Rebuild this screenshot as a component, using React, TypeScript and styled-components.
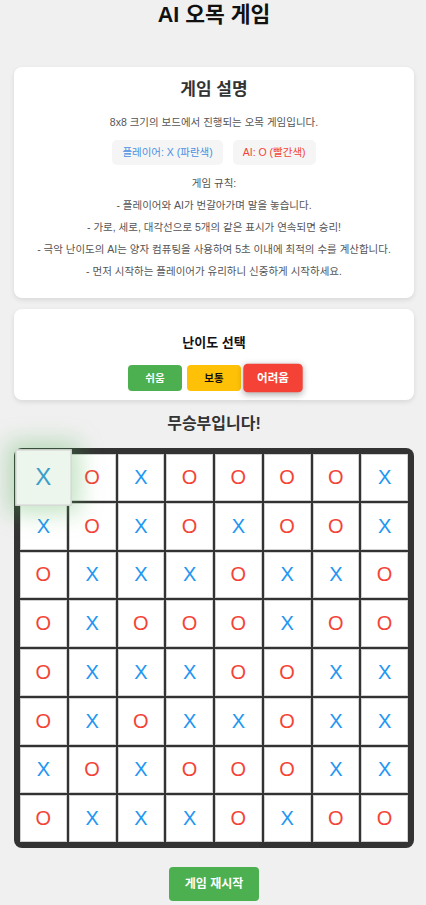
import React from "react";
import styled, { createGlobalStyle } from "styled-components";

const Global = createGlobalStyle`
  html, body { margin: 0; padding: 0; background: #f0f0f0; }
  body { font-family: "Liberation Sans", "Noto Sans CJK KR", sans-serif; }
  * { box-sizing: border-box; }
`;

const Page = styled.div`
  width: 402px;
  margin: 0 auto;
  padding: 0 0 4px 2px;
  display: flex;
  flex-direction: column;
  align-items: center;
`;

const Title = styled.h1`
  margin: 0;
  font-size: 21.5px;
  line-height: 30px;
  font-weight: 700;
  color: #111;
`;

const Card = styled.section<{ $pt: number; $pb: number; $mt: number }>`
  width: 100%;
  margin-top: ${(p) => p.$mt}px;
  padding: ${(p) => p.$pt}px 15px ${(p) => p.$pb}px;
  background: #fff;
  border-radius: 8px;
  box-shadow: 0 2px 5px rgba(0, 0, 0, 0.1);
  display: flex;
  flex-direction: column;
  align-items: center;
  text-align: center;
`;

const CardTitle = styled.h2<{ $size: number; $color: string }>`
  margin: 0;
  font-size: ${(p) => p.$size}px;
  line-height: 22px;
  font-weight: 700;
  color: ${(p) => p.$color};
`;

const Text = styled.p<{ $mt: number; $lh: number }>`
  margin: ${(p) => p.$mt}px 0 0;
  font-size: 10.5px;
  line-height: ${(p) => p.$lh}px;
  color: #555;
`;

const Rules = styled.div`
  margin-top: 3px;
`;

const Badges = styled.div`
  margin-top: 10px;
  display: flex;
  gap: 10px;
`;

const Badge = styled.span<{ $color: string }>`
  background: #f5f5f5;
  border-radius: 5px;
  padding: 5px 10px;
  font-size: 10.5px;
  line-height: 15px;
  color: ${(p) => p.$color};
`;

const Levels = styled.div`
  margin-top: 11px;
  display: flex;
  gap: 5px;
`;

const LevelButton = styled.button<{ $bg: string; $fg: string; $active?: boolean }>`
  border: none;
  border-radius: 4px;
  width: 54px;
  height: 26px;
  padding: 0;
  font-family: inherit;
  font-size: 10.5px;
  line-height: 16px;
  font-weight: 700;
  background: ${(p) => p.$bg};
  color: ${(p) => p.$fg};
  transform: ${(p) => (p.$active ? "scale(1.1)" : "none")};
  box-shadow: ${(p) => (p.$active ? "0 2px 6px rgba(0,0,0,0.3)" : "none")};
`;

const Status = styled.div`
  margin-top: 14px;
  font-size: 16px;
  line-height: 20px;
  font-weight: 700;
  color: #333;
`;

const Board = styled.div`
  margin-top: 14px;
  width: 400px;
  padding: 6px;
  background: #333;
  border-radius: 8px;
  display: grid;
  grid-template-columns: repeat(8, 1fr);
  gap: 2px;
`;

const Cell = styled.div<{ $mark: string; $hl?: boolean }>`
  aspect-ratio: 1;
  background: ${(p) => (p.$hl ? "#edf6ed" : "#fff")};
  border: 1px solid #d0d0d0;
  display: flex;
  align-items: center;
  justify-content: center;
  font-family: "Liberation Sans", sans-serif;
  font-size: 20px;
  color: ${(p) => (p.$hl ? "#3a9ec8" : p.$mark === "X" ? "#2196f3" : "#f44336")};
  position: relative;
  z-index: ${(p) => (p.$hl ? 1 : 0)};
  transform: ${(p) => (p.$hl ? "scale(1.2)" : "none")};
  box-shadow: ${(p) => (p.$hl ? "0 0 18px 6px rgba(76,175,80,0.35)" : "none")};
`;

const Restart = styled.button`
  margin-top: 19px;
  border: none;
  border-radius: 4px;
  background: #4caf50;
  color: #fff;
  font-family: inherit;
  font-size: 12px;
  line-height: 16px;
  font-weight: 700;
  padding: 9px 16px;
`;

const rows = [
  "XOXOOOOX",
  "XOXOXOOX",
  "OXXXOXXO",
  "OXOOOXOO",
  "OXXXOOXX",
  "OXOXXOXX",
  "XOXOOOXX",
  "OXXXOXOO",
];

const rules = [
  "- 플레이어와 AI가 번갈아가며 말을 놓습니다.",
  "- 가로, 세로, 대각선으로 5개의 같은 표시가 연속되면 승리!",
  "- 극악 난이도의 AI는 양자 컴퓨팅을 사용하여 5초 이내에 최적의 수를 계산합니다.",
  "- 먼저 시작하는 플레이어가 유리하니 신중하게 시작하세요.",
];

export default function App() {
  return (
    <>
      <Global />
      <Page>
        <Title>AI 오목 게임</Title>
        <Card $mt={37} $pt={12} $pb={16}>
          <CardTitle $size={17} $color="#333">게임 설명</CardTitle>
          <Text $mt={13} $lh={16}>8x8 크기의 보드에서 진행되는 오목 게임입니다.</Text>
          <Badges>
            <Badge $color="#4a90e2">플레이어: X (파란색)</Badge>
            <Badge $color="#f44336">AI: O (빨간색)</Badge>
          </Badges>
          <Text $mt={10} $lh={16}>게임 규칙:</Text>
          <Rules>
            {rules.map((r) => (
              <Text key={r} $mt={0} $lh={22}>{r}</Text>
            ))}
          </Rules>
        </Card>
        <Card $mt={11} $pt={23} $pb={9}>
          <CardTitle $size={13} $color="#111">난이도 선택</CardTitle>
          <Levels>
            <LevelButton $bg="#4caf50" $fg="#fff">쉬움</LevelButton>
            <LevelButton $bg="#ffc107" $fg="#111">보통</LevelButton>
            <LevelButton $bg="#f44336" $fg="#fff" $active>어려움</LevelButton>
          </Levels>
        </Card>
        <Status>무승부입니다!</Status>
        <Board>
          {rows.map((row, r) =>
            row.split("").map((m, c) => (
              <Cell key={`${r}-${c}`} $mark={m} $hl={r === 0 && c === 0}>
                {m}
              </Cell>
            ))
          )}
        </Board>
        <Restart>게임 재시작</Restart>
      </Page>
    </>
  );
}
